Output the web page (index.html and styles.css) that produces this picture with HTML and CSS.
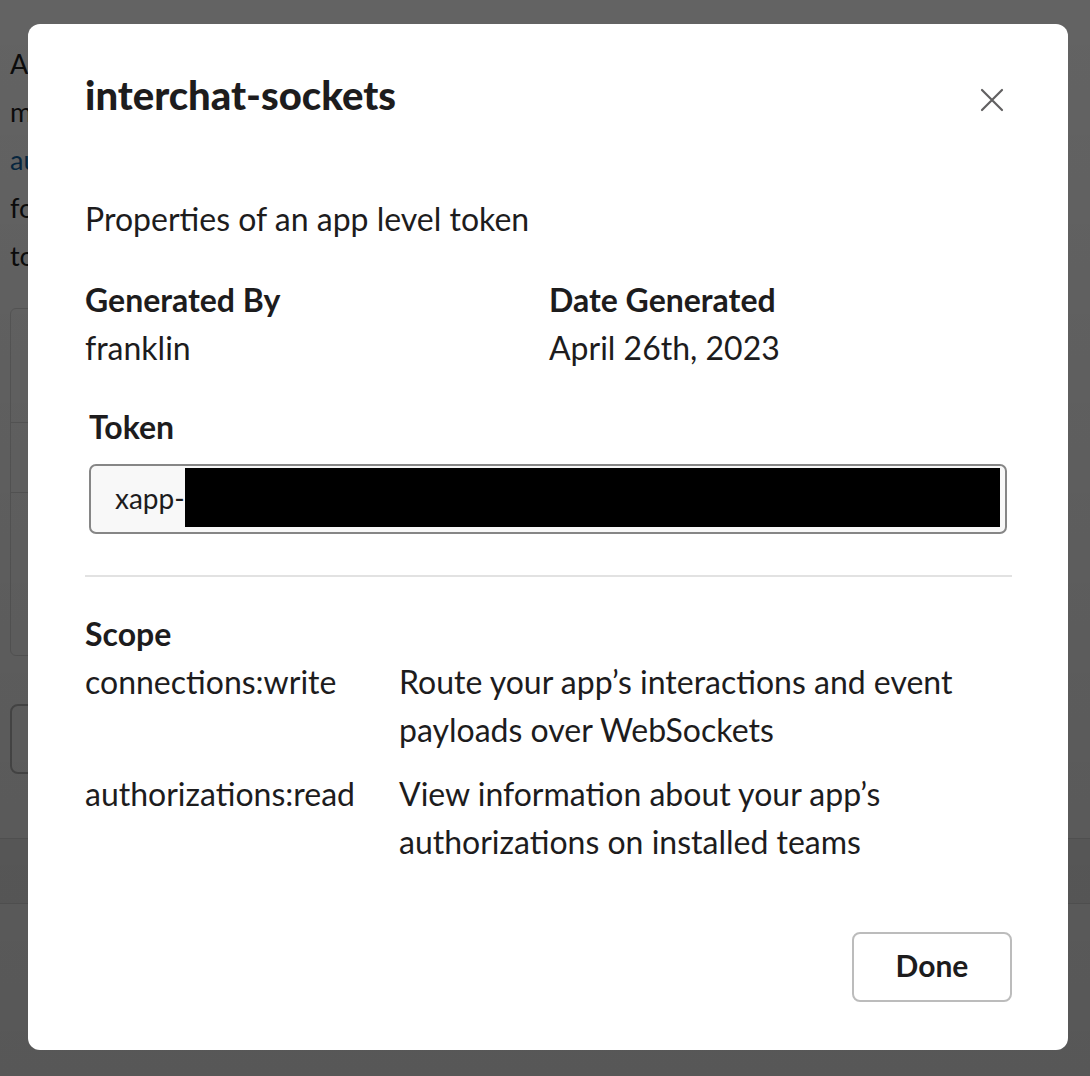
FILE: index.html
```html
<!DOCTYPE html>
<html lang="en">
<head>
<meta charset="utf-8">
<title>interchat-sockets – App-Level Token</title>
<link rel="stylesheet" href="styles.css">
</head>
<body>
<div class="page">
  <p class="intro">App-level tokens represent your app across organizations,<br>
  multiple workspaces and installations. Use them with<br>
  <a href="#" class="link">authorizations.list</a> and other APIs that apply<br>
  for your app as a whole. You can generate tokens<br>
  to use with the Socket Mode connection.</p>
  <div class="tokenlist">
    <div class="tl-head"></div>
    <div class="tl-row"></div>
    <div class="tl-row tall"></div>
  </div>
  <div class="page-btn"></div>
  <div class="page-foot"></div>
</div>

<div class="overlay"></div>

<div class="modal" role="dialog" aria-labelledby="mtitle">
  <header class="m-head">
    <h1 id="mtitle" class="m-title">interchat-sockets</h1>
    <button class="m-close" aria-label="Close">
      <svg width="24" height="24" viewBox="0 0 24 24"><path d="M2 2 L22 22 M22 2 L2 22" stroke="#616061" stroke-width="2.2" stroke-linecap="round" fill="none"/></svg>
    </button>
  </header>

  <p class="m-sub">Properties of an app level token</p>

  <div class="m-meta">
    <div class="meta-col">
      <div class="label">Generated By</div>
      <div class="value">franklin</div>
    </div>
    <div class="meta-col">
      <div class="label">Date Generated</div>
      <div class="value">April 26th, 2023</div>
    </div>
  </div>

  <div class="token">
    <div class="label">Token</div>
    <div class="token-field"><span class="token-prefix">xapp-</span><span class="redact"></span></div>
  </div>

  <hr class="divider">

  <div class="scope">
    <div class="label">Scope</div>
    <div class="scope-grid">
      <div class="scope-name">connections:write</div>
      <div class="scope-desc">Route your app’s interactions and event payloads over WebSockets</div>
      <div class="scope-name">authorizations:read</div>
      <div class="scope-desc">View information about your app’s authorizations on installed teams</div>
    </div>
  </div>

  <footer class="m-foot">
    <button class="btn-done">Done</button>
  </footer>
</div>
</body>
</html>
```

FILE: styles.css
```css
* { box-sizing: border-box; }
html, body { margin: 0; padding: 0; }
body {
  width: 1090px;
  height: 1076px;
  overflow: hidden;
  font-family: Lato, "Noto Sans", "Liberation Sans", sans-serif;
  color: #1d1c1d;
  background: #ffffff;
  position: relative;
}

/* background page (mostly hidden behind the modal) */
.page { padding: 40px 0 0 10px; }
.intro {
  margin: 0;
  font-size: 27px;
  line-height: 48px;
  white-space: nowrap;
}
.link { color: #1264a3; text-decoration: none; }
.tokenlist {
  margin-top: 28px;
  border: 1px solid #dddddd;
  border-radius: 6px;
  width: 1000px;
}
.tl-head { height: 114px; border-bottom: 1px solid #dddddd; }
.tl-row { height: 70px; border-bottom: 1px solid #dddddd; }
.tl-row.tall { height: 162px; border-bottom: 0; }
.page-btn {
  margin-top: 48px;
  width: 140px;
  height: 70px;
  border: 2px solid #bbbbbb;
  border-radius: 8px;
}
.page-foot {
  margin: 64px 0 0 -10px;
  height: 66px;
  background: #f4f4f4;
  border-top: 1px solid #e0e0e0;
  border-bottom: 1px solid #e0e0e0;
}

.overlay {
  position: absolute;
  inset: 0;
  background: linear-gradient(180deg, rgba(0,0,0,0.61) 0%, rgba(0,0,0,0.66) 100%);
}

/* modal */
.modal {
  position: absolute;
  left: 28px;
  top: 24px;
  width: 1040px;
  height: 1026px;
  background: #ffffff;
  border-radius: 12px;
  padding: 47px 56px 0 57px;
  display: flex;
  flex-direction: column;
}
.m-head {
  display: flex;
  align-items: center;
  justify-content: space-between;
}
.m-title {
  margin: 0;
  font-size: 40px;
  line-height: 48px;
  font-weight: 900;
}
.m-close {
  border: 0;
  background: none;
  padding: 0;
  margin: 10px 8px 0 0;
  width: 24px;
  height: 24px;
  display: flex;
}
.m-sub {
  margin: 76px 0 0 0;
  font-size: 32px;
  line-height: 48px;
}
.label {
  font-size: 32px;
  line-height: 48px;
  font-weight: 700;
}
.value {
  font-size: 32px;
  line-height: 48px;
}
.m-meta {
  margin-top: 33px;
  display: grid;
  grid-template-columns: 464px 1fr;
}
.token {
  margin: 31px 5px 0 4px;
}
.token-field {
  margin-top: 13px;
  height: 70px;
  border: 2px solid #868686;
  border-radius: 7px;
  background: #f8f8f8;
  display: flex;
  align-items: center;
  padding: 2px 5px 5px 24px;
  font-size: 28px;
}
.token-prefix { line-height: 48px; }
.redact {
  flex: 1;
  align-self: stretch;
  background: #000000;
}
.divider {
  margin: 41px 0 0 0;
  border: 0;
  height: 2px;
  background: #e2e2e2;
}
.scope { margin-top: 33px; }
.scope-grid {
  display: grid;
  grid-template-columns: 314px 1fr;
  row-gap: 16px;
  font-size: 32px;
  line-height: 48px;
}
.scope-desc { max-width: 580px; }
.m-foot {
  margin-top: auto;
  margin-bottom: 48px;
  display: flex;
  justify-content: flex-end;
}
.btn-done {
  width: 160px;
  height: 70px;
  padding: 0 0 4px 0;
  border: 2px solid #bcbcbc;
  border-radius: 8px;
  background: #ffffff;
  font-family: Lato, "Noto Sans", "Liberation Sans", sans-serif;
  font-size: 30px;
  font-weight: 700;
  color: #1d1c1d;
}
```
